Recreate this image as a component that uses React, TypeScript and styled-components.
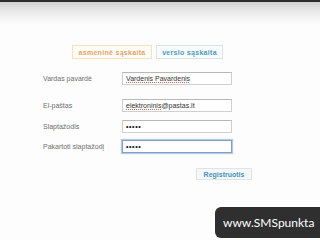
import React from "react";
import styled, { createGlobalStyle } from "styled-components";

const Global = createGlobalStyle`
  html, body { margin: 0; padding: 0; background: #fdfdfd; }
  body { font-family: "Liberation Sans", Arial, sans-serif; }
`;

const Page = styled.div`
  position: relative;
  width: 320px;
  height: 240px;
  overflow: hidden;
  background: #fdfdfd;
  display: flex;
  flex-direction: column;
`;

const TopBar = styled.div`
  height: 2px;
  background: #2b2b2b;
`;

const Shade = styled.div`
  height: 23px;
  background: linear-gradient(#cfcfcf, #e9e9e9 40%, #fdfdfd);
`;

const Tabs = styled.div`
  display: flex;
  gap: 4px;
  margin-top: 20px;
  padding-left: 72px;
`;

const Tab = styled.div<{ $tone: "orange" | "blue"; $w: number }>`
  box-sizing: border-box;
  width: ${(p) => p.$w}px;
  height: 14px;
  display: flex;
  align-items: center;
  justify-content: center;
  font-size: 7px;
  font-weight: bold;
  letter-spacing: 0.3px;
  color: ${(p) => (p.$tone === "orange" ? "#e5a467" : "#4b9cc0")};
  border: 1px solid ${(p) => (p.$tone === "orange" ? "#f3e2bd" : "#d8e3ea")};
  background: ${(p) => (p.$tone === "orange" ? "#fffdf8" : "#f9fbfc")};
`;

const Form = styled.div`
  display: flex;
  flex-direction: column;
  padding-left: 43px;
`;

const Row = styled.div<{ $mt: number }>`
  display: grid;
  grid-template-columns: 79px 110px;
  align-items: center;
  margin-top: ${(p) => p.$mt}px;
`;

const Label = styled.div`
  font-size: 7px;
  color: #6e6e6e;
`;

const Field = styled.div<{ $focus?: boolean }>`
  box-sizing: border-box;
  height: 13px;
  display: flex;
  align-items: center;
  padding-left: 3px;
  font-size: 7px;
  color: #333;
  background: #fff;
  border: 1px solid ${(p) => (p.$focus ? "#7f9fca" : "#cfcfcf")};
  border-top-color: ${(p) => (p.$focus ? "#7f9fca" : "#b8b8b8")};
  box-shadow: ${(p) => (p.$focus ? "0 0 1px 1px #b9cbe3" : "none")};
`;

const Misspelt = styled.span`
  text-decoration: underline dotted #e06a6a;
  text-underline-offset: 1px;
`;

const Dots = styled.span`
  font-size: 7px;
  letter-spacing: 0.6px;
  color: #111;
  font-weight: bold;
`;

const ButtonRow = styled.div`
  display: flex;
  margin-top: 15px;
  padding-left: 196px;
`;

const Button = styled.div`
  box-sizing: border-box;
  width: 56px;
  height: 12px;
  display: flex;
  align-items: center;
  justify-content: center;
  font-size: 7px;
  font-weight: bold;
  color: #4a93bb;
  background: #f5f7f9;
  border: 1px solid #dfe4e8;
`;

const Watermark = styled.div`
  position: absolute;
  left: 215px;
  top: 207px;
  width: 120px;
  height: 31px;
  box-sizing: border-box;
  border-radius: 6px;
  background: #2f2f2f;
  color: #fff;
  font-family: "Lato", "Open Sans", sans-serif;
  font-size: 12px;
  display: flex;
  align-items: center;
  padding-left: 8px;
  white-space: nowrap;
`;

export default function App() {
  return (
    <>
      <Global />
      <Page>
        <TopBar />
        <Shade />
        <Tabs>
          <Tab $tone="orange" $w={80}>asmeninė sąskaita</Tab>
          <Tab $tone="blue" $w={67}>verslo sąskaita</Tab>
        </Tabs>
        <Form>
          <Row $mt={13}>
            <Label>Vardas pavardė</Label>
            <Field>
              <Misspelt>Vardenis Pavardenis</Misspelt>
            </Field>
          </Row>
          <Row $mt={14}>
            <Label>El-paštas</Label>
            <Field>
              <Misspelt>elektroninis</Misspelt>@pastas.lt
            </Field>
          </Row>
          <Row $mt={8}>
            <Label>Slaptažodis</Label>
            <Field>
              <Dots>•••••</Dots>
            </Field>
          </Row>
          <Row $mt={7}>
            <Label>Pakartoti slaptažodį</Label>
            <Field $focus>
              <Dots>•••••</Dots>
            </Field>
          </Row>
        </Form>
        <ButtonRow>
          <Button>Registruotis</Button>
        </ButtonRow>
        <Watermark>www.SMSpunkta</Watermark>
      </Page>
    </>
  );
}
